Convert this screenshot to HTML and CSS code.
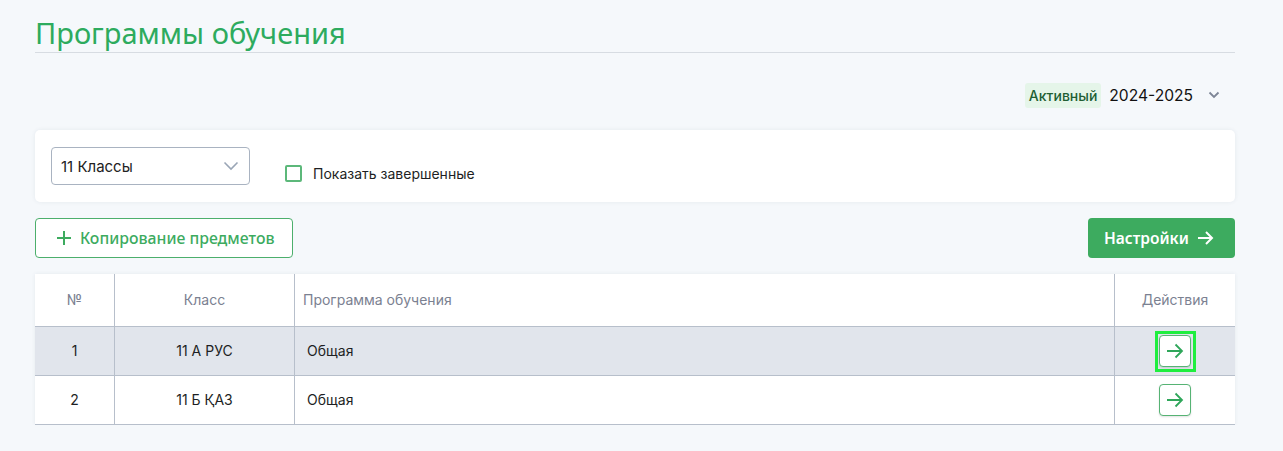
FILE: index.html
```html
<!DOCTYPE html>
<html lang="ru">
<head>
    <meta charset="UTF-8">
    <meta name="viewport" content="width=device-width, initial-scale=1.0">
    <title>Программы обучения</title>
    <link rel="stylesheet" href="styles.css">
</head>
<body>
    <div class="page">
        <h1 class="page-title">Программы обучения</h1>

        <div class="year-bar">
            <span class="badge">Активный</span>
            <span class="year">2024-2025</span>
            <svg class="chev" width="12" height="8" viewBox="0 0 12 8"><path d="M1.5 1.5 L6 6 L10.5 1.5" fill="none" stroke="#7d8596" stroke-width="1.8"/></svg>
        </div>

        <div class="filters">
            <div class="select">
                <span>11 Классы</span>
                <svg width="16" height="10" viewBox="0 0 16 10"><path d="M1.5 1.5 L8 8 L14.5 1.5" fill="none" stroke="#9aa6b6" stroke-width="1.6"/></svg>
            </div>
            <label class="check">
                <span class="box"></span>
                Показать завершенные
            </label>
        </div>

        <div class="actions">
            <button class="btn-outline">
                <svg width="16" height="16" viewBox="0 0 16 16"><path d="M8 1 V15 M1 8 H15" stroke="#3dab5f" stroke-width="2"/></svg>
                Копирование предметов
            </button>
            <button class="btn-green">
                Настройки
                <svg width="17" height="16" viewBox="0 0 17 16"><path d="M1 8 H15 M9 2 L15 8 L9 14" fill="none" stroke="#fff" stroke-width="2"/></svg>
            </button>
        </div>

        <table class="grid">
            <thead>
                <tr>
                    <th class="c-num">№</th>
                    <th class="c-class">Класс</th>
                    <th class="c-prog">Программа обучения</th>
                    <th class="c-act">Действия</th>
                </tr>
            </thead>
            <tbody>
                <tr class="hover">
                    <td class="c-num">1</td>
                    <td class="c-class">11 А РУС</td>
                    <td class="c-prog">Общая</td>
                    <td class="c-act"><span class="focus-ring"><button class="go"><svg width="18" height="16" viewBox="0 0 18 16"><path d="M1 8 H16 M9.5 1.5 L16 8 L9.5 14.5" fill="none" stroke="#2fa65a" stroke-width="1.8"/></svg></button></span></td>
                </tr>
                <tr>
                    <td class="c-num">2</td>
                    <td class="c-class">11 Б ҚАЗ</td>
                    <td class="c-prog">Общая</td>
                    <td class="c-act"><button class="go"><svg width="18" height="16" viewBox="0 0 18 16"><path d="M1 8 H16 M9.5 1.5 L16 8 L9.5 14.5" fill="none" stroke="#2fa65a" stroke-width="1.8"/></svg></button></td>
                </tr>
            </tbody>
        </table>
    </div>
</body>
</html>
```

FILE: styles.css
```css
body {
    margin: 0;
    background-color: #f5f8fb;
    font-family: Inter, "Noto Sans", sans-serif;
    color: #1d1f24;
}

.page {
    padding: 0 48px 0 35px;
}

.page-title {
    margin: 0;
    padding-top: 14px;
    height: 38px;
    font-family: "Noto Sans", "Open Sans", sans-serif;
    font-size: 29px;
    font-weight: 400;
    line-height: 38px;
    color: #2dab5e;
    border-bottom: 1px solid #d7dce2;
}

.year-bar {
    display: flex;
    align-items: center;
    justify-content: flex-end;
    height: 26px;
    margin-top: 29px;
    padding-right: 15px;
}

.badge {
    background-color: #e5f5e9;
    color: #215e33;
    font-size: 14px;
    font-weight: 500;
    padding: 4px 4px;
    border-radius: 3px;
    line-height: 17px;
}

.year {
    font-size: 15.6px;
    margin-left: 8px;
    color: #111;
}

.chev {
    margin-left: 15px;
}

.filters {
    display: flex;
    align-items: flex-start;
    margin-top: 22px;
    background-color: #fff;
    border-radius: 5px;
    box-shadow: 0 0 4px rgba(40, 60, 90, 0.08);
    padding: 17px 16px 17px 16px;
    height: 38px;
}

.select {
    display: flex;
    align-items: center;
    justify-content: space-between;
    width: 178px;
    height: 36px;
    padding: 0 10px 0 9px;
    border: 1px solid #a9b3c1;
    border-radius: 4px;
    font-size: 15px;
    color: #222;
}

.check {
    display: flex;
    align-items: center;
    margin-left: 35px;
    margin-top: 18px;
    font-size: 14px;
    color: #1d1f24;
}

.box {
    width: 13px;
    height: 13px;
    border: 2px solid #5cb87a;
    border-radius: 2px;
    margin-right: 11px;
}

.actions {
    display: flex;
    justify-content: space-between;
    margin-top: 16px;
}

button {
    font-family: "Noto Sans", "Open Sans", sans-serif;
    cursor: pointer;
}

.btn-outline {
    display: flex;
    align-items: center;
    gap: 8px;
    height: 40px;
    width: 258px;
    padding: 0 0 0 20px;
    background-color: #fff;
    border: 1px solid #4caf6c;
    border-radius: 4px;
    color: #3dab5f;
    font-size: 15.8px;
    font-weight: 500;
}

.btn-green {
    display: flex;
    align-items: center;
    gap: 8px;
    height: 40px;
    width: 147px;
    padding: 0 0 0 16px;
    background-color: #3dab5f;
    border: none;
    border-radius: 4px;
    color: #fff;
    font-size: 15.5px;
    font-weight: 600;
}

.grid {
    width: 100%;
    margin-top: 16px;
    border-collapse: collapse;
    background-color: #fff;
    box-shadow: 0 0 4px rgba(40, 60, 90, 0.08);
    font-size: 14px;
}

.grid th {
    height: 51px;
    padding-bottom: 1px;
    font-weight: 400;
    color: #7b8191;
    border-bottom: 1px solid #b7bfcb;
}

.grid td {
    height: 46px;
    padding-bottom: 2px;
    border-bottom: 1px solid #b7bfcb;
}

.grid th, .grid td {
    padding-top: 0;
    padding-right: 0;
    text-align: center;
    border-left: 1px solid #b7bfcb;
}

.grid th:first-child, .grid td:first-child {
    border-left: none;
}

.grid .c-num { width: 79px; padding-left: 0; }
.grid .c-class { width: 179px; padding-left: 0; }
.grid .c-act { width: 120px; padding-left: 0; }

.grid th.c-prog { text-align: left; padding-left: 8px; }
.grid td.c-prog { text-align: left; padding-left: 12px; }

.grid td.c-act { padding-bottom: 0; }

.grid tr.hover td {
    background-color: #e1e5ec;
}

.go {
    display: inline-flex;
    align-items: center;
    justify-content: center;
    width: 32px;
    height: 32px;
    padding: 0;
    vertical-align: middle;
    background-color: #fff;
    border: 1px solid #56b374;
    border-radius: 4px;
    box-shadow: 0 1px 2px rgba(0, 0, 0, 0.12);
}

.focus-ring {
    display: inline-block;
    vertical-align: middle;
    border: 3px solid #1fee3f;
    padding: 1px 2px 2px 1px;
    margin: -4px -5px -5px -4px;
    line-height: 0;
}
```
